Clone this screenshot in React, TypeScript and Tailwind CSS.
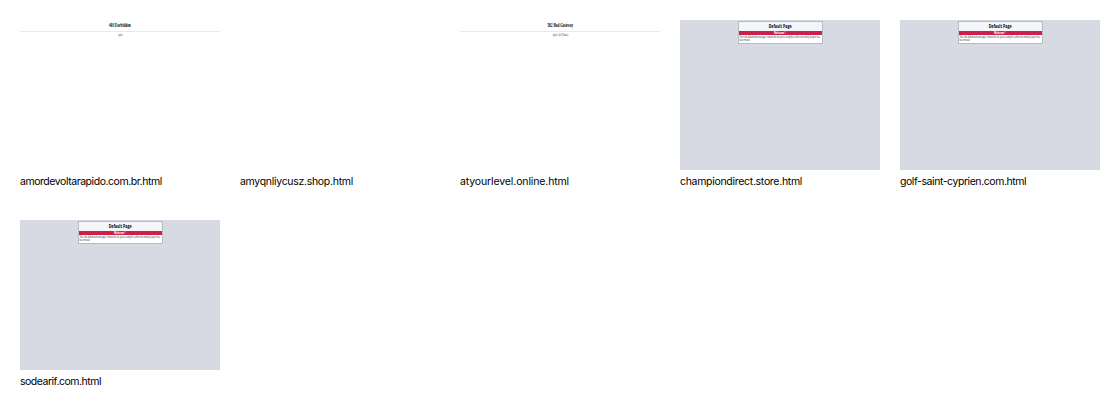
import type { ReactNode } from 'react';

function Cell({ name, tracking, children }: { name: string; tracking: string; children?: ReactNode }) {
  return (
    <figure className="h-[180px] w-[200px]">
      <div className="h-[150px] w-[200px] overflow-hidden">{children}</div>
      <figcaption className={`mt-1 h-4 whitespace-nowrap font-['Inter',sans-serif] text-[10.5px] leading-4 text-black ${tracking}`}>
        {name}
      </figcaption>
    </figure>
  );
}

function ServerError({ title, server, titleScale, serverScale }: { title: string; server: string; titleScale: string; serverScale: string }) {
  return (
    <div className="flex flex-col items-center whitespace-nowrap pt-px font-['Liberation_Serif',serif] text-black">
      <h1 className={`h-[10px] text-[7px] font-bold leading-[8px] ${titleScale}`}>{title}</h1>
      <div className="h-px w-full bg-[#e9e9e9]" />
      <p className={`mt-px h-1 text-[3px] leading-[4px] text-neutral-700 ${serverScale}`}>{server}</p>
    </div>
  );
}

function DefaultPage() {
  return (
    <div className="flex h-full justify-center bg-[#d7dae2] pt-px font-['Open_Sans',sans-serif]">
      <div className="flex h-[23px] w-[85px] flex-col whitespace-nowrap border border-[#b5bcc3] bg-white text-black">
        <h1 className="flex h-[8.5px] shrink-0 items-center justify-center bg-[#f4f5f9] text-[6px] font-bold leading-[8px]">
          <span className="-mt-px scale-x-[.6]">Default Page</span>
        </h1>
        <h2 className="flex h-1 shrink-0 items-center justify-center bg-[#cc1f4a] text-[3px] font-bold leading-[4px] text-white">
          <span className="scale-x-[.75]">Welcome !</span>
        </h2>
        <p className="origin-left scale-x-[.61] pl-px pt-px text-[2.8px] leading-[3px]">
          This is the default welcome page. It means the site you're seeing for a either not entirely setup or has
          <br />
          been moved.
        </p>
      </div>
    </div>
  );
}

export default function App() {
  return (
    <main className="grid h-[420px] w-[1120px] grid-cols-[repeat(5,200px)] grid-rows-[180px_180px] gap-5 overflow-hidden bg-white p-5">
      <Cell name="amordevoltarapido.com.br.html" tracking="tracking-[-0.45px]">
        <ServerError title="403 Forbidden" server="nginx" titleScale="scale-x-[.5]" serverScale="scale-x-[.65]" />
      </Cell>
      <Cell name="amyqnliycusz.shop.html" tracking="tracking-[-0.3px]" />
      <Cell name="atyourlevel.online.html" tracking="tracking-[-0.13px]">
        <ServerError title="502 Bad Gateway" server="nginx/1.24.0 (Ubuntu)" titleScale="scale-x-[.49]" serverScale="scale-x-[.58]" />
      </Cell>
      <Cell name="championdirect.store.html" tracking="tracking-[-0.3px]"><DefaultPage /></Cell>
      <Cell name="golf-saint-cyprien.com.html" tracking="tracking-[-0.44px]"><DefaultPage /></Cell>
      <Cell name="sodearif.com.html" tracking="tracking-[-0.49px]"><DefaultPage /></Cell>
    </main>
  );
}
